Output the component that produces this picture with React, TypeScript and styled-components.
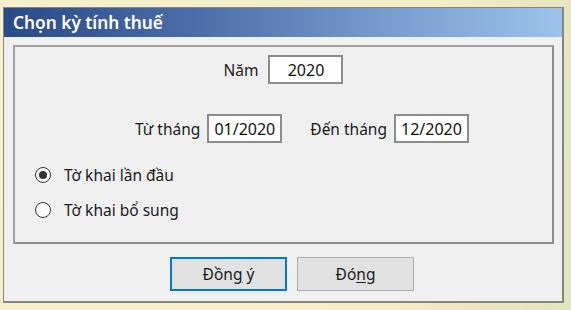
import styled, { createGlobalStyle } from "styled-components";

const GlobalStyle = createGlobalStyle`
  html, body {
    margin: 0;
    padding: 0;
  }
  body {
    width: 571px;
    height: 310px;
    overflow: hidden;
    background: linear-gradient(100deg, #f6f0cc 0%, #f4edc6 70%, #ece5bf 85%, #dfe7c0 100%);
    font-family: "Noto Sans", "Liberation Sans", sans-serif;
  }
`;

const Desktop = styled.div`
  width: 571px;
  height: 310px;
  padding: 7px 0 0 3px;
  box-sizing: border-box;
`;

const Window = styled.div`
  width: 561px;
  height: 296px;
  box-sizing: border-box;
  border: 1px solid #858585;
  border-right-width: 2px;
  border-bottom-width: 2px;
  background: #f0f0f0;
  display: flex;
  flex-direction: column;
`;

const TitleBar = styled.div`
  height: 29px;
  display: flex;
  align-items: center;
  padding-left: 9px;
  background: linear-gradient(90deg, #2a4988 0%, #4d6ea8 35%, #7b9dcf 70%, #9dc2eb 100%);
  color: #ffffff;
  font-size: 17.3px;
  font-weight: 600;
`;

const Body = styled.div`
  flex: 1;
  padding: 8px 9px 0 9px;
  display: flex;
  flex-direction: column;
`;

const GroupBox = styled.div`
  width: 541px;
  height: 199px;
  box-sizing: border-box;
  border: 2px solid #a0a0a0;
  border-right-color: #8f8f8f;
  border-bottom-color: #8f8f8f;
  padding: 8px 0 0 20px;
  display: flex;
  flex-direction: column;
`;

const Row = styled.div<{ $indent?: number; $center?: boolean; $gap?: number }>`
  display: flex;
  align-items: center;
  justify-content: ${(p) => (p.$center ? "center" : "flex-start")};
  padding-left: ${(p) => p.$indent ?? 0}px;
  padding-right: ${(p) => (p.$center ? 20 : 0)}px;
  gap: ${(p) => p.$gap ?? 10}px;
`;

const Label = styled.span`
  font-size: 15.5px;
  color: #1a1a1a;
`;

const Field = styled.div<{ $w: number }>`
  width: ${(p) => p.$w}px;
  height: 29px;
  box-sizing: border-box;
  border: 2px solid #8c8c8c;
  background: #ffffff;
  display: flex;
  align-items: center;
  justify-content: center;
  font-size: 16px;
  color: #111;
`;

const FieldPair = styled.div`
  display: flex;
  align-items: center;
  gap: 7px;
`;

const RadioList = styled.div`
  margin-top: 22px;
  display: flex;
  flex-direction: column;
  gap: 15px;
`;

const RadioRow = styled.label`
  display: flex;
  align-items: center;
  gap: 13px;
  font-size: 15.5px;
  color: #1a1a1a;
  height: 20px;
`;

const RadioDot = styled.span<{ $checked?: boolean }>`
  width: 16px;
  height: 16px;
  box-sizing: border-box;
  border-radius: 50%;
  border: 1px solid #333;
  background: #fff;
  display: flex;
  align-items: center;
  justify-content: center;
  &::after {
    content: "";
    width: 8px;
    height: 8px;
    border-radius: 50%;
    background: ${(p) => (p.$checked ? "#333" : "transparent")};
  }
`;

const Buttons = styled.div`
  display: flex;
  gap: 10px;
  padding: 13px 0 0 157px;
`;

const Button = styled.button<{ $default?: boolean }>`
  width: 117px;
  height: 34px;
  box-sizing: border-box;
  background: #e1e1e1;
  border: ${(p) => (p.$default ? "2px solid #0078d7" : "1px solid #adadad")};
  font-family: "Noto Sans", "Liberation Sans", sans-serif;
  font-size: 15.5px;
  color: #1a1a1a;
  padding: 0;
  u {
    text-underline-offset: 2px;
  }
`;

export default function App() {
  return (
    <>
      <GlobalStyle />
      <Desktop>
        <Window>
          <TitleBar>Chọn kỳ tính thuế</TitleBar>
          <Body>
            <GroupBox>
              <Row $center $gap={10}>
                <Label>Năm</Label>
                <Field $w={75}>2020</Field>
              </Row>
              <Row $indent={100} $gap={28} style={{ marginTop: 30 }}>
                <FieldPair>
                  <Label>Từ tháng</Label>
                  <Field $w={75}>01/2020</Field>
                </FieldPair>
                <FieldPair>
                  <Label>Đến tháng</Label>
                  <Field $w={75}>12/2020</Field>
                </FieldPair>
              </Row>
              <RadioList>
                <RadioRow>
                  <RadioDot $checked />
                  Tờ khai lần đầu
                </RadioRow>
                <RadioRow>
                  <RadioDot />
                  Tờ khai bổ sung
                </RadioRow>
              </RadioList>
            </GroupBox>
            <Buttons>
              <Button $default>
                Đồn<u>g</u> ý
              </Button>
              <Button>
                Đó<u>n</u>g
              </Button>
            </Buttons>
          </Body>
        </Window>
      </Desktop>
    </>
  );
}
